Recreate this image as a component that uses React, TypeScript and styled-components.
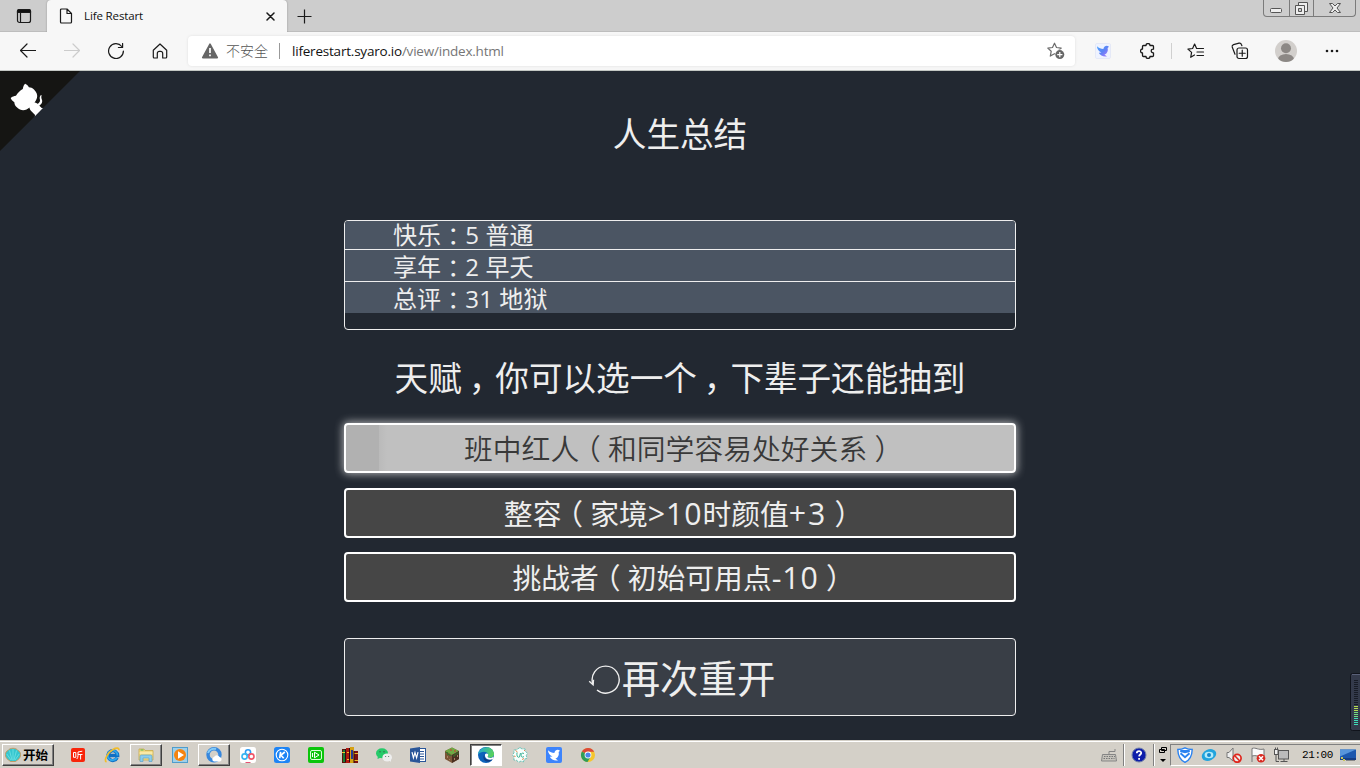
import React from "react";
import styled, { createGlobalStyle, css } from "styled-components";

const Global = createGlobalStyle`
  * { box-sizing: border-box; }
  html, body { margin: 0; padding: 0; overflow: hidden; }
  svg { display: block; flex: none; }
`;

const ui = `"Open Sans", "Noto Sans CJK SC", sans-serif`;

const Window = styled.div`
  width: 1360px;
  height: 768px;
  display: flex;
  flex-direction: column;
  overflow: hidden;
  background: #222831;
  font-family: ${ui};
`;

/* ---------- browser chrome ---------- */

const TabStrip = styled.div`
  height: 32px;
  flex: none;
  display: flex;
  background: #cdcdcd;
  box-shadow: inset 0 -1px 0 #bdbdbd;
`;

const TabActions = styled.div`
  width: 47px;
  display: flex;
  align-items: center;
  justify-content: center;
`;

const Tab = styled.div`
  width: 240px;
  display: flex;
  align-items: center;
  padding: 0 10px 0 12px;
  background: #f7f7f7;
  border-radius: 4px 4px 0 0;
  box-shadow: 0 0 2px rgba(0, 0, 0, 0.3);
  clip-path: inset(0 -3px 0 -3px);
`;

const TabTitle = styled.span`
  flex: 1;
  margin-left: 11px;
  margin-top: -1px;
  font-size: 11.5px;
  letter-spacing: -0.12px;
  color: #111;
`;

const NewTab = styled.div`
  flex: 1;
  display: flex;
  align-items: center;
  padding-left: 10px;
`;

const WindowControls = styled.div`
  width: 93px;
  height: 17px;
  margin-right: 4px;
  display: flex;
  border: 1px solid #7b7b7b;
  border-top: 0;
  border-radius: 0 0 4px 4px;
`;

const WindowControl = styled.div<{ $w: number }>`
  width: ${(p) => p.$w}px;
  display: flex;
  align-items: center;
  justify-content: center;
  & + & { border-left: 1px solid #7b7b7b; }
`;

const Toolbar = styled.div`
  height: 39px;
  flex: none;
  display: flex;
  align-items: center;
  background: #f7f7f7;
  border-bottom: 1px solid #c3c7c3;
`;

const NavButtons = styled.div`
  width: 188px;
  display: flex;
  gap: 28px;
  padding-left: 20px;
`;

const AddressBar = styled.div`
  width: 887px;
  height: 30px;
  display: flex;
  align-items: center;
  padding: 0 10px 0 13px;
  background: #fff;
  border-radius: 4px;
  box-shadow: 0 0 3px rgba(0, 0, 0, 0.1);
`;

const Insecure = styled.span`
  width: 43px;
  margin-left: 7px;
  margin-top: -2px;
  font-size: 14px;
  font-weight: 300;
  color: #555;
  font-family: "Noto Sans CJK SC", sans-serif;
`;

const Divider = styled.i<{ $color: string; $h: number }>`
  width: 1px;
  height: ${(p) => p.$h}px;
  background: ${(p) => p.$color};
`;

const Url = styled.span`
  flex: 1;
  margin-left: 2px;
  font-size: 13.5px;
  letter-spacing: -0.21px;
  color: #767676;
  b { font-weight: 400; color: #111; }
`;

const Extensions = styled.div`
  flex: 1;
  display: flex;
  align-items: center;
`;

const Slot = styled.div<{ $w: number }>`
  width: ${(p) => p.$w}px;
  flex: none;
  display: flex;
  justify-content: center;
`;

/* ---------- game page ---------- */

const Page = styled.main`
  position: relative;
  flex: 1;
  min-height: 0;
  display: flex;
  flex-direction: column;
  align-items: center;
  color: #eee;
`;

const Corner = styled.div`
  position: absolute;
  left: 0;
  top: 0;
`;

const Meter = styled.div`
  position: absolute;
  right: 0;
  bottom: 9px;
`;

const Heading = styled.h1<{ $top: number }>`
  margin: ${(p) => p.$top}px 0 0;
  height: 48px;
  line-height: 48px;
  font-size: 33.6px;
  font-weight: 400;
`;

const Summary = styled.ul`
  width: 672px;
  height: 110px;
  margin: 62px 0 0;
  padding: 0;
  list-style: none;
  border: 1px solid #eee;
  border-radius: 4px;
  overflow: hidden;
`;

const SummaryRow = styled.li`
  height: 32px;
  padding-left: 48px;
  background: #4b5563;
  font-size: 24px;
  line-height: 31px;
  letter-spacing: 0.1px;
  white-space: pre;
  border-bottom: 1px solid #eee;
  &:first-child { height: 29px; line-height: 25px; }
  &:last-child { height: 31px; border-bottom: 0; }
`;

const Talents = styled.div`
  width: 672px;
  margin-top: 22px;
  display: flex;
  flex-direction: column;
`;

const Talent = styled.div<{ $selected?: boolean }>`
  height: 50px;
  display: flex;
  align-items: center;
  justify-content: center;
  border: 2px solid #fff;
  border-radius: 4px;
  background: #464646;
  font-size: 28.8px;
  line-height: 46px;
  & + & { margin-top: 14px; }
  ${(p) =>
    p.$selected &&
    css`
      margin-bottom: 1px;
      color: #393939;
      font-weight: 350;
      background: linear-gradient(90deg, #b1b1b1 33px, #bababa 33px, #c0c0c0 41px);
      box-shadow: 0 0 9px 1px rgba(238, 238, 238, 0.7);
    `}
`;

/* Full-width punctuation, drawn in the middle of its square. */
const Mark = styled.span<{ $comma?: boolean }>`
  padding: ${(p) => (p.$comma ? "0 0.29em 0 0.21em" : "0 0.25em")};
  font-family: "Noto Sans CJK SC", sans-serif;
  font-feature-settings: "halt" 1;
`;

const Latin = styled.span<{ $gap: number }>`
  font-size: 1.05em;
  line-height: 1;
  letter-spacing: ${(p) => p.$gap}px;
`;

const Restart = styled.button`
  width: 672px;
  height: 78px;
  margin-top: 36px;
  padding: 0 0 0 3px;
  display: flex;
  align-items: center;
  justify-content: center;
  gap: 2px;
  border: 1px solid #eee;
  border-radius: 4px;
  background: #393e46;
  color: #eee;
  font: 400 38.4px "Noto Sans CJK SC", sans-serif;
  svg { margin-top: 2px; }
`;

const RestartLabel = styled.span`
  line-height: 60px;
  margin-top: -3px;
`;

/* ---------- desktop taskbar ---------- */

const Taskbar = styled.footer`
  height: 28px;
  flex: none;
  display: flex;
  align-items: center;
  background: #d4d0c8;
  border-top: 1px solid #d4d0c8;
  box-shadow: inset 0 1px 0 #fff;
`;

const raised = css`
  border: 1px solid;
  border-color: #fff #404040 #404040 #fff;
  box-shadow: inset -1px -1px 0 #808080;
`;

const StartButton = styled.div`
  width: 52px;
  height: 22px;
  margin: 1px 7px 0 2px;
  display: flex;
  align-items: center;
  gap: 2px;
  padding: 0 0 1px 2px;
  ${raised}
  font: 700 12.5px "Noto Sans CJK SC", sans-serif;
  color: #000;
`;

const TaskSlot = styled.div<{ $mode?: "raised" | "pressed" }>`
  width: 32px;
  height: 22px;
  margin: 1px 1px 0;
  display: flex;
  align-items: center;
  justify-content: center;
  ${(p) => p.$mode === "raised" && raised}
  ${(p) =>
    p.$mode === "pressed" &&
    css`
      background: #fff;
      border: 1px solid;
      border-color: #404040 #fff #fff #404040;
      box-shadow: inset 1px 1px 0 #808080;
    `}
`;

const Gap = styled.div`
  flex: 1;
`;

const Groove = styled.i`
  width: 2px;
  height: 22px;
  margin-top: 1px;
  border-left: 1px solid #808080;
  border-right: 1px solid #fff;
`;

const Tray = styled.div`
  width: 190px;
  height: 22px;
  margin-top: 1px;
  display: flex;
  align-items: center;
  border: 1px solid;
  border-color: #808080 #fff #fff #808080;
  border-right: 0;
`;

const Clock = styled.span`
  width: 43px;
  padding-left: 8px;
  font: 11px "Liberation Mono", monospace;
  letter-spacing: -0.4px;
  white-space: nowrap;
  color: #000;
`;

/* ---------- icons ---------- */

const line = { fill: "none", stroke: "#1a1a1a", strokeWidth: 1.2, strokeLinecap: "round", strokeLinejoin: "round" } as const;

const TabMenuIcon = () => (
  <svg width="16" height="16" viewBox="0 0 16 16" {...line}>
    <rect x="1.5" y="1.5" width="13" height="13" rx="2" />
    <path d="M1.5 3.5V3a1.5 1.5 0 0 1 1.5-1.5h10A1.5 1.5 0 0 1 14.5 3v1.5h-13Z" fill="#111" />
    <path d="M4.5 5v9.5" />
  </svg>
);
const PageIcon = () => (
  <svg width="14" height="16" viewBox="0 0 14 16" {...line}>
    <path d="M1.5 2a1 1 0 0 1 1-1H8l4.5 4.5V14a1 1 0 0 1-1 1h-9a1 1 0 0 1-1-1ZM8 1v4.5h4.5" />
  </svg>
);
const CloseIcon = () => (
  <svg width="9" height="9" viewBox="0 0 9 9" {...line} strokeWidth={1.5}>
    <path d="M1 1l7 7M8 1L1 8" />
  </svg>
);
const PlusIcon = () => (
  <svg width="15" height="15" viewBox="0 0 15 15" {...line} strokeLinecap="butt">
    <path d="M7.5 0.5v14M.5 7.5h14" />
  </svg>
);
const ArrowIcon = ({ color = "#1a1a1a", flip = false }) => (
  <svg width="16" height="16" viewBox="0 0 16 16" {...line} stroke={color}>
    <path d={flip ? "M.5 7.5h15M9 1l6.500 6.500L9 14" : "M15.500 7.500H.5M7 1L.5 7.500 7 14"} />
  </svg>
);
const ReloadIcon = () => (
  <svg width="16" height="16" viewBox="0 0 16 16" {...line}>
    <path d="M15.4 8A7.4 7.4 0 1 1 13.8 3.5M14.6.5v4h-4.2" />
  </svg>
);
const HomeIcon = () => (
  <svg width="16" height="16" viewBox="0 0 16 16" {...line}>
    <path d="M1.3 7.2 8 1l6.700 6.200V14a1 1 0 0 1-1 1h-3v-4.600a2 2 0 0 0-2-2H7.300a2 2 0 0 0-2 2V15h-3a1 1 0 0 1-1-1Z" />
  </svg>
);
const WarningIcon = () => (
  <svg width="18" height="16" viewBox="0 0 18 16">
    <path d="M9 1.200 16.300 14.600H1.700Z" fill="#666" stroke="#666" strokeWidth="1.600" strokeLinejoin="round" />
    <path d="M9 5v5M9 11.500v1.800" stroke="#fff" strokeWidth="1.700" />
  </svg>
);
const AddStarIcon = () => (
  <svg width="18" height="18" viewBox="0 0 18 18">
    <path d="M7.500 1.200l2 4.300 4.700.6-3.500 3.200.9 4.800-4.100-2.400-4.200 2.400.9-4.800L.8 6.100l4.700-.6Z" {...line} stroke="#6b6b6b" />
    <circle cx="12.800" cy="12.600" r="5" fill="#fff" />
    <circle cx="12.800" cy="12.600" r="4.500" fill="#666" />
    <path d="M12.800 10v5.200M10.200 12.600h5.200" stroke="#fff" strokeWidth="1.200" />
  </svg>
);
const birdPath = "M2 3.200C4 5 6 5.800 8.300 6C9.300 2.800 11.800 1.800 14 3.800L12.600 5c.8 3-.6 5.800-3.200 6.600l2.600 1.800C8.500 14 5 12.600 3.800 9.800l2.700-.2C3.800 8.400 2 6 2 3.200Z";
const BirdExtIcon = () => (
  <svg width="16" height="16" viewBox="0 0 16 16">
    <defs>
      <linearGradient id="bird" x1="0" y1="0" x2="1" y2="1">
        <stop stopColor="#47a6ff" />
        <stop offset=".5" stopColor="#5d83f5" />
        <stop offset="1" stopColor="#b57aff" />
      </linearGradient>
    </defs>
    <rect x=".5" y=".5" width="15" height="15" rx="1.500" fill="#eff3ff" stroke="#e5e9f7" />
    <path d={birdPath} fill="url(#bird)" />
  </svg>
);
const PuzzleIcon = () => (
  <svg width="16" height="16" viewBox="0 0 16 16" {...line} strokeWidth={1.300}>
    <path d="M3.500 2.500H6a2 2 0 0 1 4 0h2.500a1 1 0 0 1 1 1v2.700c-3-.6-3 4 0 3.600v2.700a1 1 0 0 1-1 1H10a2 2 0 0 1-4 0H3.500a1 1 0 0 1-1-1V10a2 2 0 0 1 0-4V3.500a1 1 0 0 1 1-1Z" />
  </svg>
);
const FavouritesIcon = () => (
  <svg width="18" height="16" viewBox="0 0 18 16" {...line}>
    <path d="M7.500 12 3.700 14.300 4.600 9.400.9 6.100l4.700-.6 2-4.400 2 4.400h6.900M10 9h6.500M10 12.500h6.500" />
  </svg>
);
const CollectionsIcon = () => (
  <svg width="18" height="18" viewBox="0 0 18 18" {...line}>
    <rect x="6" y="6" width="10.500" height="10.500" rx="2" />
    <path d="M11.250 8.200v6M8.200 11.250h6M4 12.200 1.200 5A2 2 0 0 1 2.500 2.600L8 1.200a2 2 0 0 1 2.400 1.300l.5 1.200" />
  </svg>
);
const ProfileIcon = () => (
  <svg width="22" height="22" viewBox="0 0 22 22">
    <defs><clipPath id="face"><circle cx="11" cy="11" r="11" /></clipPath></defs>
    <g clipPath="url(#face)">
      <rect width="22" height="22" fill="#d2cfcc" />
      <circle cx="11" cy="8.200" r="5" fill="#8c8885" />
      <ellipse cx="11" cy="19.500" rx="8" ry="5.500" fill="#8c8885" />
    </g>
  </svg>
);
const MoreIcon = () => (
  <svg width="14" height="4" viewBox="0 0 14 4" fill="#1a1a1a">
    <circle cx="2" cy="2" r="1.300" /><circle cx="7" cy="2" r="1.300" /><circle cx="12" cy="2" r="1.300" />
  </svg>
);
const wc = { fill: "#eee", stroke: "#555", strokeWidth: 1 } as const;
const MinIcon = () => (
  <svg width="12" height="14" viewBox="0 0 12 14" {...wc}><rect x=".5" y="7.500" width="11" height="4" rx="1" /></svg>
);
const RestoreIcon = () => (
  <svg width="13" height="13" viewBox="0 0 13 13" {...wc}>
    <path d="M3.500.5h9v9h-9Z" /><path d="M.5 3.500h9v9h-9Z" /><path d="M3.500 6.500h3v3h-3Z" fill="#cdcdcd" />
  </svg>
);
const CrossIcon = () => (
  <svg width="12" height="12" viewBox="0 0 12 12" {...wc}>
    <path d="M.5 1.500h3L6 4l2.500-2.500h3L8 6l3.500 4.500h-3L6 8l-2.500 2.500h-3L4 6Z" />
  </svg>
);

const GithubCorner = () => (
  <svg width="80" height="80" viewBox="0 0 250 250">
    <g transform="translate(250 0) scale(-1 1)">
      <path d="M0,0 L115,115 L130,115 L142,142 L250,250 L250,0 Z" fill="#151513" />
      <path fill="#fff" d="M128.3,109.0 C113.8,99.7 119.0,89.6 119.0,89.6 C122.0,82.7 120.5,78.6 120.5,78.6 C119.2,72.0 123.4,76.3 123.4,76.3 C127.3,80.9 125.5,87.3 125.5,87.3 C122.9,97.6 130.6,101.9 134.4,103.2" />
      <path fill="#fff" d="M115.0,115.0 C114.9,115.1 118.7,116.5 119.8,115.4 L133.7,101.6 C136.9,99.2 139.9,98.4 142.2,98.6 C133.8,88.0 127.5,74.4 143.8,58.0 C148.5,53.4 154.0,51.2 159.7,51.0 C160.3,49.4 163.2,43.6 171.4,40.1 C171.4,40.1 176.1,42.5 178.8,56.2 C183.1,58.6 187.2,61.8 190.9,65.4 C194.5,69.0 197.7,73.2 200.1,77.6 C213.8,80.2 216.3,84.9 216.3,84.9 C212.7,93.1 206.9,96.0 205.4,96.6 C205.1,102.4 203.0,107.8 198.3,112.5 C181.9,128.9 168.3,122.5 157.7,114.1 C157.9,116.9 156.7,120.9 152.7,124.9 L141.0,136.5 C139.8,137.7 141.6,141.9 141.8,141.8 Z" />
    </g>
  </svg>
);

const RestartIcon = () => (
  <svg width="32" height="32" viewBox="0 0 32 32" fill="none" stroke="#eee" strokeWidth="1.400">
    <path d="M5 22.300A13.500 13.500 0 1 1 9 28" />
    <path d="M1.200 19.200l3.900 3.500.4-5" />
  </svg>
);

const LevelMeter = () => (
  <svg width="10" height="58" viewBox="0 0 10 58">
    <rect x=".5" y=".5" width="12" height="57" rx="2" fill="#343a4b" stroke="#10131b" />
    <path d="M2 1.500h8" stroke="#596078" />
    {Array.from({ length: 23 }, (_, i) => (
      <rect key={i} x="4" y={7 + i * 2} width="4" height="1"
        fill={i < 13 ? "#181c26" : i < 16 ? "#b5dc4f" : i < 19 ? "#72dd80" : "#3fdcb8"} />
    ))}
  </svg>
);

const Svg16 = ({ children }: { children: React.ReactNode }) => (
  <svg width="16" height="16" viewBox="0 0 16 16">{children}</svg>
);

const ShellIcon = () => (
  <Svg16>
    <path d="M3.500 13C-1 10 0 4.500 3 3.500 5 .5 11 .5 13 3.500c3 1 4 6.500-.5 9.500l-2 1.500h-5Z" fill="#35c6cf" stroke="#c99558" strokeWidth=".9" />
    <path d="M8 13.500V2M7 13 4.500 3.500M9 13l2.500-9.500M6 13 1.800 7M10 13l4.200-6" stroke="#7ce6e6" strokeWidth=".7" />
  </Svg16>
);
const TingIcon = () => (
  <Svg16>
    <rect x="1" y="1" width="14" height="14" rx="2" fill="#f8250a" />
    <path d="M3.500 5.500h2.300v4.800H3.500ZM12.300 4.200 8 5v3.500c0 1.500-.4 2.500-1.200 3.500M8 7.500h4.500M10.600 7.500V12.500" fill="none" stroke="#fff" strokeWidth="1" />
  </Svg16>
);
const IeIcon = () => (
  <Svg16>
    <path d="M13.200 10.800A4.900 4.900 0 1 1 13.700 8.500H5" fill="none" stroke="#0f6fc4" strokeWidth="3.300" />
    <path d="M13 10.500A4.900 4.900 0 1 1 13.500 8.500" fill="none" stroke="#2fa8ec" strokeWidth="1.800" />
    <path d="M2.500 15C-1 13.500 4.500 5 9 2.500c3-1.800 6.500-2 5.800.8" fill="none" stroke="#f2bd2b" strokeWidth="1.700" />
  </Svg16>
);
const FolderIcon = () => (
  <Svg16>
    <path d="M1 2h5l1 1.500h8V13H1Z" fill="#f3dc86" stroke="#c9ab49" strokeWidth=".8" />
    <path d="M1.500 6h13" stroke="#fff6c6" />
    <path d="M2 14.500V9.500Q2 8 3.500 8h9Q14 8 14 9.500v5h-3V11H5v3.500Z" fill="#8bcdec" stroke="#5ba4cb" strokeWidth=".7" />
    <path d="M2.500 3h3" stroke="#4eb84c" />
  </Svg16>
);
const PlayerIcon = () => (
  <Svg16>
    <rect x=".5" y=".5" width="15" height="15" fill="#9fd0ea" stroke="#4f9dcc" />
    <circle cx="8" cy="8" r="6" fill="#f58410" />
    <path d="M6 4.300v7.400L12 8Z" fill="#fff" />
  </Svg16>
);
const CloudBrowserIcon = () => (
  <Svg16>
    <circle cx="8" cy="7.800" r="6" fill="none" stroke="#3687dd" strokeWidth="3.400" />
    <path d="M2 6a6.300 6.300 0 0 1 8-4" fill="none" stroke="#83caf7" strokeWidth="2" />
    <path d="M8 14.500a2.400 2.400 0 0 1 0-4.600 3.300 3.300 0 0 1 5.600 0 2.400 2.400 0 0 1 .5 4.600Z" fill="#fff" />
  </Svg16>
);
const NetdiskIcon = () => (
  <Svg16>
    <rect width="16" height="16" rx="2.500" fill="#fff" />
    <circle cx="8" cy="5.300" r="2.600" fill="none" stroke="#2d9cf4" strokeWidth="1.600" />
    <circle cx="4.600" cy="9.500" r="2.600" fill="none" stroke="#39b5f1" strokeWidth="1.600" />
    <circle cx="11.400" cy="9.500" r="2.600" fill="none" stroke="#f0576a" strokeWidth="1.600" />
    <path d="M5.500 15.500h5" stroke="#e55271" />
  </Svg16>
);
const KugouIcon = () => (
  <Svg16>
    <rect width="16" height="16" rx="2.500" fill="#1d84f5" />
    <circle cx="8" cy="8" r="5.800" fill="none" stroke="#fff" strokeWidth="1.100" />
    <path d="M6.600 4.800 5.700 11.200M10.800 5 7 8.200l2.700 3" fill="none" stroke="#fff" strokeWidth="1.700" />
  </Svg16>
);
const VideoIcon = () => (
  <Svg16>
    <rect width="16" height="16" rx="2" fill="#0bc50b" />
    <rect x="2.500" y="3.500" width="11" height="9" rx="1.500" fill="none" stroke="#d7ffd7" />
    <path d="M6.500 5.200v5.600L11 8Z" fill="none" stroke="#fff" /><path d="M4.500 6v4" stroke="#fff" />
  </Svg16>
);
const BooksIcon = () => (
  <Svg16>
    <path d="M0 2h5v14H0Z" fill="#5a150d" /><path d="M1 3h2v12H1Z" fill="#1c7b34" />
    <path d="M4 1h5v15H4Z" fill="#b01810" /><path d="M5 5h2v1H5zM5 12h2v1H5zM0 5h3v1H0z" fill="#f3c02b" />
    <path d="M8 0h4v16H8Z" fill="#d6a112" /><path d="M9 3h2v9H9Z" fill="#253993" />
    <path d="M12 4h4v12h-4Z" fill="#7c1010" /><path d="M12 6h4v1h-4zM12 13h4v1h-4z" fill="#eeba26" />
    <path d="M3.500 2v13M7.500 1v14M12 4v12" stroke="#2c0b12" />
  </Svg16>
);
const WechatIcon = () => (
  <Svg16>
    <ellipse cx="6" cy="6.200" rx="6" ry="5" fill="#25ca69" /><path d="m2 8-.5 4L5 10.500Z" fill="#25ca69" />
    <ellipse cx="11.200" cy="10.400" rx="4.800" ry="4" fill="#eee" /><path d="m13 13 2 2v-3.500Z" fill="#eee" />
    <g fill="#3a5b48"><circle cx="4" cy="4.800" r=".7" /><circle cx="8" cy="4.800" r=".7" /><circle cx="9.700" cy="9.400" r=".5" /><circle cx="12.700" cy="9.400" r=".5" /></g>
  </Svg16>
);
const WordIcon = () => (
  <Svg16>
    <rect x="8" y="1.500" width="7.500" height="13" fill="#fff" stroke="#2a5699" />
    <path d="M10 4.500h4M10 7h4M10 9.500h4M10 12h4" stroke="#2a5699" />
    <path d="M0 1.500 10 0v16L0 14.500Z" fill="#2a5699" />
    <path d="m2 5.200 1.400 5.600L5 5.500l1.600 5.300L8 5.200" fill="none" stroke="#fff" strokeWidth="1.200" />
  </Svg16>
);
const BlockIcon = () => (
  <Svg16>
    <path d="m8 .5 7 3.500v8L8 16l-7-4V4Z" fill="#7c5638" />
    <path d="m8 .5 7 3.500-7 4-7-4Z" fill="#6eaa43" /><path d="m8 8 7-4v8l-7 4Z" fill="#4b3021" />
    <path d="M1.500 5.500h2v2h2v1h2M9 9h2V7h3V5" fill="none" stroke="#39712d" />
    <path d="M3 9h1v2H3zM5 12h1v1H5zM10 11h1v2h-1zM13 8h1v2h-1z" fill="#a68462" />
    <path d="M6 3h2M10 4h2" stroke="#ce3932" />
  </Svg16>
);
const EdgeIcon = () => (
  <Svg16>
    <defs>
      <linearGradient id="edgeA" x1="0" y1="0" x2="1" y2=".3"><stop stopColor="#1ca5dd" /><stop offset="1" stopColor="#55d05f" /></linearGradient>
    </defs>
    <circle cx="8" cy="8" r="8" fill="#0c63ba" />
    <path d="M0 7.500C1-.500 14-3 16 6.500c.5 3.500-3 4.800-5.700 4-1.500-.5-.2-1.200-.2-2.700C10 4 3 3.500 0 7.500Z" fill="url(#edgeA)" />
    <path d="M6.500 7.200c-1.500 4 3 7 8 4.500-.5 1-1.500 2-2.500 2.600C7 16 3.500 11 6.500 7.200Z" fill="#103e84" />
    <path d="M7.200 7c1.200-1.200 3-.4 3 .8 0 1.400-1.200 2 0 2.700 1.600.8 3.500.5 4.800-.4l1 .8-1.300 1.300C10 14 5.800 10.500 7.200 7Z" fill="#fff" />
  </Svg16>
);
const FlowerIcon = () => (
  <Svg16>
    <path d="M8 .5 10 2l3-.2.5 2.700 2 1.700-1.200 2.300.7 2.700-2.500 1L11.300 15 9 14l-2.500 1.500-1.700-2.200-3-.3.300-3L.5 8 2 5.800l-.3-2.700 2.800-.4Z" fill="#f8fffc" stroke="#6fc4ba" strokeWidth="1" strokeDasharray="3 1" />
    <path d="M5 5.500c-.5 4 1 5.500 2.500 4.500L8.500 6M12 6.500c-2-1-3 0-2.800 2s1.500 2 2.800 1" fill="none" stroke="#3bb295" />
    <path d="M3.500 3.500l2 1.500M10.500 13l1-2M2 9l1.500.5M12 4l1-1" stroke="#e9824a" />
  </Svg16>
);
const BirdIcon = () => (
  <Svg16>
    <rect width="16" height="16" rx="2" fill="#3d84fc" /><path d={birdPath} fill="#fff" />
  </Svg16>
);
const ChromeIcon = () => (
  <Svg16>
    <circle cx="8" cy="8" r="7" fill="#f5c52d" />
    <path d="M8 8 1.900 4.500A7 7 0 0 1 14.200 4.700H8Z" fill="#dc4939" />
    <path d="M8 8 1.900 4.500A7 7 0 0 0 7.500 15L10.500 10Z" fill="#2f9d58" />
    <circle cx="8" cy="8" r="3.400" fill="#fff" /><circle cx="8" cy="8" r="2.600" fill="#4d86e8" />
  </Svg16>
);
const KeyboardIcon = () => (
  <Svg16>
    <path d="M1.500 7.500h13l1 6.500H.5Z" fill="#c6c3bc" stroke="#858585" /><path d="M3 9.500h11M2.500 11.500h11" stroke="#777" strokeDasharray="1.500 1" />
    <path d="M8 7V4.500h6V2" fill="none" stroke="#858585" />
  </Svg16>
);
const HelpIcon = () => (
  <Svg16>
    <circle cx="8" cy="8" r="7" fill="#0e1eaa" stroke="#7382a8" />
    <path d="M5.800 6.200C5.800 3.500 10.300 3.600 10.200 6c0 1.500-2 1.600-2.100 3.400M8.100 11v1.800" fill="none" stroke="#fff" strokeWidth="1.800" />
  </Svg16>
);
const OverflowIcon = () => (
  <svg width="10" height="18" viewBox="0 0 10 18" fill="none" stroke="#000">
    <path d="M3.500 1.500h5v3h-5ZM1.500 3.500h5v3h-5Z" fill="#d4d0c8" /><path d="M2 13h6l-3 3Z" fill="#000" stroke="none" />
  </svg>
);
const ShieldIcon = () => (
  <Svg16>
    <path d="M.8 2.500Q5 2.500 8 .8q3 1.700 7.200 1.700Q15 12 8 15.300 1 12 .8 2.500Z" fill="#fff" stroke="#2a82f0" strokeWidth="1.400" />
    <path d="M3.300 4h9.400L8 5.200ZM3.500 6.200 8 10.300l4.500-4.100" fill="none" stroke="#2a82f0" strokeWidth="1.900" />
  </Svg16>
);
const SwirlIcon = () => (
  <Svg16>
    <ellipse cx="8" cy="8" rx="7.500" ry="5.500" transform="rotate(-25 8 8)" fill="#21a4dd" />
    <ellipse cx="8" cy="8" rx="4.400" ry="3.300" fill="#b2ebfb" /><circle cx="8" cy="8" r="2" fill="#1689cd" />
  </Svg16>
);
const MutedIcon = () => (
  <Svg16>
    <path d="M1 5.500h2L7 1v13L3 10.500H1Z" fill="#eee" stroke="#777" />
    <circle cx="11.200" cy="11.300" r="3.900" fill="#eee" stroke="#df251c" strokeWidth="1.700" /><path d="m8.500 8.500 5.300 5.500" stroke="#df251c" strokeWidth="1.600" />
  </Svg16>
);
const FlagIcon = () => (
  <Svg16>
    <path d="M2 15V1.500c4-1.500 6 2 12 .5v7.500c-5 1-8-2-12-.5" fill="#fafafa" stroke="#777" />
    <circle cx="11" cy="11.300" r="4.300" fill="#d82920" /><path d="m9 9.300 4 4m0-4-4 4" stroke="#fff" strokeWidth="1.500" />
  </Svg16>
);
const NetworkIcon = () => (
  <Svg16>
    <rect x="5.500" y="3.500" width="10" height="8.500" fill="#bbb" stroke="#555" /><path d="M7.500 14.500h7M11 12v2M3 7v7.500h3" fill="none" stroke="#555" />
    <rect x="1.500" y="2.500" width="3.500" height="5" fill="#eee" stroke="#555" /><path d="M2.500.5v2M4.500.5v2" stroke="#555" />
  </Svg16>
);
const DesktopIcon = () => (
  <Svg16>
    <path d="M0 2.500h16V13H0Z" fill="#1c58ad" /><path d="M0 2.500h16L0 9.500Z" fill="#5796db" /><path d="M0 11h16v2H0Z" fill="#163f85" /><path d="M1 10h2v2H1zM3 12h2v2H3z" fill="#c9c657" /><path d="M6 13.500h9" stroke="#888" />
  </Svg16>
);

const tasks: { icon: React.FC; mode?: "raised" | "pressed" }[] = [
  { icon: TingIcon }, { icon: IeIcon }, { icon: FolderIcon, mode: "raised" }, { icon: PlayerIcon },
  { icon: CloudBrowserIcon, mode: "raised" }, { icon: NetdiskIcon }, { icon: KugouIcon }, { icon: VideoIcon },
  { icon: BooksIcon }, { icon: WechatIcon }, { icon: WordIcon }, { icon: BlockIcon },
  { icon: EdgeIcon, mode: "pressed" }, { icon: FlowerIcon }, { icon: BirdIcon }, { icon: ChromeIcon },
];

const summary = [["快乐", "5 普通"], ["享年", "2 早夭"], ["总评", "31 地狱"]];
const talents = [["班中红人", "和同学容易处好关系"], ["整容", "家境>10时颜值+3"], ["挑战者", "初始可用点-10"]];

const Note = ({ text }: { text: string }) => (
  <>
    {text.split(/([>+-]\d+)/).map((part, i) =>
      i % 2 ? <Latin key={i} $gap={part[0] === "+" ? 2 : 0.9}>{part}</Latin> : part
    )}
  </>
);

export default function App() {
  return (
    <Window>
      <Global />
      <TabStrip>
        <TabActions><TabMenuIcon /></TabActions>
        <Tab><PageIcon /><TabTitle>Life Restart</TabTitle><Slot $w={13}><CloseIcon /></Slot></Tab>
        <NewTab><PlusIcon /></NewTab>
        <WindowControls>
          <WindowControl $w={25}><MinIcon /></WindowControl>
          <WindowControl $w={25}><RestoreIcon /></WindowControl>
          <WindowControl $w={42}><CrossIcon /></WindowControl>
        </WindowControls>
      </TabStrip>
      <Toolbar>
        <NavButtons><ArrowIcon /><ArrowIcon flip color="#ccc" /><ReloadIcon /><HomeIcon /></NavButtons>
        <AddressBar>
          <WarningIcon /><Insecure>不安全</Insecure>
          <Slot $w={21}><Divider $color="#999" $h={16} /></Slot>
          <Url><b>liferestart.syaro.io</b>/view/index.html</Url>
          <AddStarIcon />
        </AddressBar>
        <Extensions>
          <Slot $w={56}><BirdExtIcon /></Slot>
          <Slot $w={33}><PuzzleIcon /></Slot>
          <Slot $w={15}><Divider $color="#d0d0d0" $h={16} /></Slot>
          <Slot $w={34}><FavouritesIcon /></Slot>
          <Slot $w={54}><CollectionsIcon /></Slot>
          <Slot $w={38}><ProfileIcon /></Slot>
          <Slot $w={54}><MoreIcon /></Slot>
        </Extensions>
      </Toolbar>
      <Page>
        <Corner><GithubCorner /></Corner>
        <Heading $top={39}>人生总结</Heading>
        <Summary>
          {summary.map(([name, value]) => (
            <SummaryRow key={name}>{name}<Mark>：</Mark>{value}</SummaryRow>
          ))}
        </Summary>
        <Heading as="h2" $top={23}>天赋<Mark $comma>，</Mark>你可以选一个<Mark $comma>，</Mark>下辈子还能抽到</Heading>
        <Talents>
          {talents.map(([name, note], i) => (
            <Talent key={name} $selected={i === 0}>
              <span>{name}<Mark>（</Mark><Note text={note} /><Mark>）</Mark></span>
            </Talent>
          ))}
        </Talents>
        <Restart><RestartIcon /><RestartLabel>再次重开</RestartLabel></Restart>
        <Meter><LevelMeter /></Meter>
      </Page>
      <Taskbar>
        <StartButton><ShellIcon />开始</StartButton>
        {tasks.map(({ icon: Icon, mode }, i) => <TaskSlot key={i} $mode={mode}><Icon /></TaskSlot>)}
        <Gap />
        <Slot $w={29}><KeyboardIcon /></Slot>
        <Groove />
        <Slot $w={28}><HelpIcon /></Slot>
        <Groove />
        <Slot $w={15}><OverflowIcon /></Slot>
        <Tray>
          <Slot $w={28}><ShieldIcon /></Slot>
          <Slot $w={20}><SwirlIcon /></Slot>
          <Slot $w={29}><MutedIcon /></Slot>
          <Slot $w={20}><FlagIcon /></Slot>
          <Slot $w={26}><NetworkIcon /></Slot>
          <Clock>21:00</Clock>
          <Slot $w={22}><DesktopIcon /></Slot>
        </Tray>
      </Taskbar>
    </Window>
  );
}
